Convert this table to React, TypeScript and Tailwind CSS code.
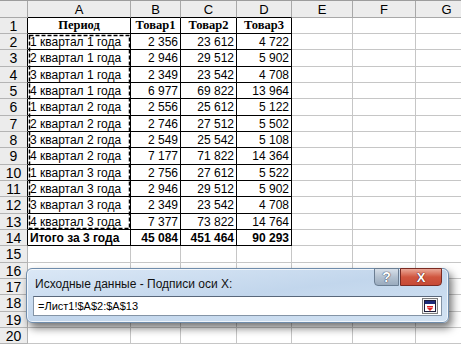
const COLS = [
  { id: 'A', w: 'w-[103px]' },
  { id: 'B', w: 'w-[50px]' },
  { id: 'C', w: 'w-[56px]' },
  { id: 'D', w: 'w-[55px]' },
  { id: 'E', w: 'w-[61px]' },
  { id: 'F', w: 'w-[63px]' },
  { id: 'G', w: 'w-[62px]' },
];

const HEAD = ['Период', 'Товар1', 'Товар2', 'Товар3'];

const ROWS: string[][] = [
  ['1 квартал 1 года', '2 356', '23 612', '4 722'],
  ['2 квартал 1 года', '2 946', '29 512', '5 902'],
  ['3 квартал 1 года', '2 349', '23 542', '4 708'],
  ['4 квартал 1 года', '6 977', '69 822', '13 964'],
  ['1 квартал 2 года', '2 556', '25 612', '5 122'],
  ['2 квартал 2 года', '2 746', '27 512', '5 502'],
  ['3 квартал 2 года', '2 549', '25 542', '5 108'],
  ['4 квартал 2 года', '7 177', '71 822', '14 364'],
  ['1 квартал 3 года', '2 756', '27 612', '5 522'],
  ['2 квартал 3 года', '2 946', '29 512', '5 902'],
  ['3 квартал 3 года', '2 349', '23 542', '4 708'],
  ['4 квартал 3 года', '7 377', '73 822', '14 764'],
];

const TOTAL = ['Итого за 3 года', '45 084', '451 464', '90 293'];

export default function App() {
  return (
    <div className="relative h-[344px] w-[461px] overflow-hidden bg-white font-['Liberation_Sans',Arial,sans-serif] text-black">
      <Sheet />
      {/* copy marquee around A2:A13 */}
      <svg className="pointer-events-none absolute left-0 top-0" width="461" height="344">
        <rect x="29.5" y="35.5" width="100" height="193" fill="none" stroke="#000" strokeWidth="1.5" strokeDasharray="4 2" />
      </svg>
      <SourceDialog />
    </div>
  );
}

function Sheet() {
  return (
    <div className="flex flex-col">
      <div className="flex h-[18px] border-t border-[#9c9c9c] bg-[#ececec]">
        <div className="w-[28px] shrink-0 border-r border-b border-[#a8a8a8]" />
        {COLS.map((c, i) => (
          <div
            key={c.id}
            className={`${c.w} flex shrink-0 items-center justify-center border-r border-b text-[13px] leading-none ${
              i < 4 ? 'border-b-black border-r-[#a8a8a8]' : 'border-[#a8a8a8]'
            }`}
          >
            {c.id}
          </div>
        ))}
      </div>
      {Array.from({ length: 20 }, (_, i) => i + 1).map((r) => (
        <div key={r} className={`flex ${(r - 1) % 3 === 2 ? 'h-[17px]' : 'h-4'}`}>
          <div
            className={`flex w-[28px] shrink-0 items-center justify-center border-r border-b bg-[#ececec] text-[14px] leading-none ${
              r <= 14 ? 'border-r-black border-b-[#b4b4b4]' : 'border-[#b4b4b4]'
            }`}
          >
            {r}
          </div>
          {COLS.map((c, ci) => (
            <Cell key={c.id} row={r} col={ci} width={c.w} />
          ))}
        </div>
      ))}
    </div>
  );
}

function Cell(props: { row: number; col: number; width: string }) {
  const { row, col, width } = props;
  const inTable = row <= 14 && col < 4;
  const border = inTable ? 'border-black' : 'border-[#c6c6c6]';

  let content: React.ReactNode = null;
  if (inTable) {
    if (row === 1) {
      content = (
        <span className="w-full text-center font-['Liberation_Serif','Times_New_Roman',serif] text-[12.5px] font-bold">
          {HEAD[col]}
        </span>
      );
    } else {
      const text = row === 14 ? TOTAL[col] : ROWS[row - 2][col];
      content = (
        <span
          className={`w-full whitespace-nowrap text-[12px] ${row === 14 ? 'font-bold' : ''} ${
            col === 0 ? 'pl-[2px] text-left' : 'pr-[2px] text-right'
          }`}
        >
          {text}
        </span>
      );
    }
  }

  return (
    <div className={`${width} flex shrink-0 items-center overflow-hidden border-r border-b leading-none ${border}`}>
      {content}
    </div>
  );
}

function SourceDialog() {
  return (
    <div className="absolute left-[26px] top-[268px] h-[55px] w-[423px] rounded-[6px] border border-[#6f8cab] bg-gradient-to-br from-[#dbe8f6] via-[#c2d6ec] to-[#d3e3f3] px-[6px] pt-[6px] shadow-[3px_5px_8px_rgba(0,0,0,0.55),inset_0_0_0_1px_rgba(255,255,255,0.7)]">
      <div className="flex h-[18px] items-center pl-[2px] text-[12px] leading-none text-[#111]">
        Исходные данные - Подписи оси X:
      </div>
      <div className="mt-[3px] flex h-[20px] items-center border border-[#8494a6] border-t-[#59677a] bg-white pl-[4px] pr-[3px]">
        <span className="flex-1 text-[11px] leading-none">=Лист1!$A$2:$A$13</span>
        <CollapseIcon />
      </div>

      <div className="absolute right-[6px] top-[-1px] flex gap-[1px]">
        <div className="flex h-[18px] w-[25px] items-center justify-center rounded-bl-[4px] border border-[#6b7e93] bg-gradient-to-b from-[#d7e0ea] via-[#b3c1d0] to-[#9aabbe] text-[14px] font-bold leading-none text-white [text-shadow:0_0_1px_#334,0_0_1px_#334]">
          ?
        </div>
        <div className="flex h-[18px] w-[42px] items-center justify-center rounded-br-[4px] border border-[#7a2a22] bg-gradient-to-b from-[#e9a797] via-[#d0563f] to-[#c74a35] text-[13px] font-bold leading-none text-white [text-shadow:0_0_1px_#511,0_0_1px_#511]">
          X
        </div>
      </div>
    </div>
  );
}

function CollapseIcon() {
  return (
    <svg width="16" height="16" viewBox="0 0 16 16" className="shrink-0">
      <rect x="0.5" y="0.5" width="15" height="15" fill="#f2f2f2" stroke="#7d7d7d" />
      <rect x="2.5" y="2.5" width="11" height="11" fill="#fff" stroke="#1d1d3a" />
      <rect x="3" y="3" width="10" height="3" fill="#1c2a78" />
      <rect x="5" y="8" width="6" height="1.5" fill="#d22" />
      <path d="M5 10 L11 10 L8 13 Z" fill="#d22" />
    </svg>
  );
}
